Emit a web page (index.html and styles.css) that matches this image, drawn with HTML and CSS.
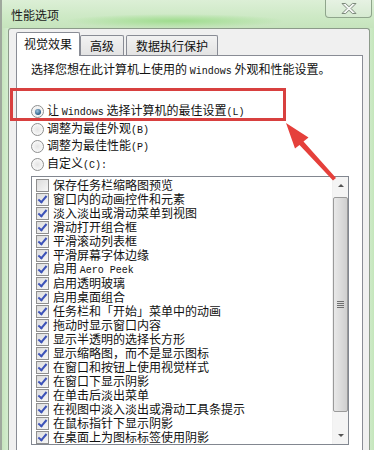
FILE: index.html
```html
<!DOCTYPE html>
<html lang="zh-CN">
<head>
<meta charset="utf-8">
<title>性能选项</title>
<link rel="stylesheet" href="styles.css">
</head>
<body>
<div class="window">
  <div class="titlebar">
    <span class="title">性能选项</span>
    <div class="close">
      <svg width="22" height="13" viewBox="0 0 22 13"><path d="M4 1.5h3.6l3.4 3.2 3.4-3.2H18l-5 5 5 5h-3.6L11 8.3l-3.4 3.2H4l5-5z" fill="#f4f6f4" stroke="#7d8a7c" stroke-width="1"/></svg>
    </div>
  </div>
  <div class="client">
    <div class="tabs">
      <div class="tab active">视觉效果</div>
      <div class="tab">高级</div>
      <div class="tab">数据执行保护</div>
    </div>
    <div class="panel">
      <p class="desc">选择您想在此计算机上使用的 <span class="lat">Windows</span> 外观和性能设置。</p>
      <div class="radios">
        <label class="radio checked"><span class="rb"></span><span class="txt">让 <span class="lat">Windows</span> 选择计算机的最佳设置<span class="lat">(L)</span></span></label>
        <label class="radio"><span class="rb"></span><span class="txt">调整为最佳外观<span class="lat">(B)</span></span></label>
        <label class="radio"><span class="rb"></span><span class="txt">调整为最佳性能<span class="lat">(P)</span></span></label>
        <label class="radio"><span class="rb"></span><span class="txt">自定义<span class="lat">(C):</span></span></label>
      </div>
      <div class="list">
        <ul class="items">
          <li><span class="cb"></span><span class="txt">保存任务栏缩略图预览</span></li>
          <li><span class="cb on"></span><span class="txt">窗口内的动画控件和元素</span></li>
          <li><span class="cb on"></span><span class="txt">淡入淡出或滑动菜单到视图</span></li>
          <li><span class="cb on"></span><span class="txt">滑动打开组合框</span></li>
          <li><span class="cb on"></span><span class="txt">平滑滚动列表框</span></li>
          <li><span class="cb on"></span><span class="txt">平滑屏幕字体边缘</span></li>
          <li><span class="cb on"></span><span class="txt">启用 <span class="lat">Aero Peek</span></span></li>
          <li><span class="cb on"></span><span class="txt">启用透明玻璃</span></li>
          <li><span class="cb on"></span><span class="txt">启用桌面组合</span></li>
          <li><span class="cb on"></span><span class="txt">任务栏和「开始」菜单中的动画</span></li>
          <li><span class="cb on"></span><span class="txt">拖动时显示窗口内容</span></li>
          <li><span class="cb on"></span><span class="txt">显示半透明的选择长方形</span></li>
          <li><span class="cb on"></span><span class="txt">显示缩略图，而不是显示图标</span></li>
          <li><span class="cb on"></span><span class="txt">在窗口和按钮上使用视觉样式</span></li>
          <li><span class="cb on"></span><span class="txt">在窗口下显示阴影</span></li>
          <li><span class="cb on"></span><span class="txt">在单击后淡出菜单</span></li>
          <li><span class="cb on"></span><span class="txt">在视图中淡入淡出或滑动工具条提示</span></li>
          <li><span class="cb on"></span><span class="txt">在鼠标指针下显示阴影</span></li>
          <li><span class="cb on"></span><span class="txt">在桌面上为图标标签使用阴影</span></li>
        </ul>
        <div class="scrollbar">
          <div class="arrow up"></div>
          <div class="thumb"><span class="grip"></span></div>
          <div class="arrow down"></div>
        </div>
      </div>
    </div>
  </div>
</div>
<div class="highlight"></div>
<svg class="pointer" width="374" height="450" viewBox="0 0 374 450">
  <polygon points="286,123 308.5,137.5 303.5,141.5 336,178 333,180.5 299.5,145 295,148.5" fill="#e5403b"/>
</svg>
</body>
</html>
```

FILE: styles.css
```css
* { box-sizing: border-box; }
html, body { margin: 0; padding: 0; }
body {
  width: 374px;
  height: 450px;
  overflow: hidden;
  position: relative;
  font-family: "Noto Sans CJK SC", "Noto Sans", sans-serif;
  font-size: 12px;
  color: #111;
  background: #cfe8c8;
}
.window {
  height: 450px;
  display: flex;
  flex-direction: column;
  background: linear-gradient(90deg, #9fa89d 0, #9fa89d 2px, #c6e4bd 2px, #d3ecce 8px, #d3ecce 368px, #c4e6bb 100%);
}
.titlebar {
  height: 28px;
  flex: none;
  display: flex;
  align-items: flex-start;
  justify-content: space-between;
  background:
    radial-gradient(ellipse 110px 7px at 175px 21px, #9fdc8e 0%, rgba(166,222,150,0.6) 50%, rgba(166,222,150,0) 100%),
    linear-gradient(90deg, #9fa89d 0, #9fa89d 2px, transparent 2px),
    linear-gradient(180deg, #dcefd6 0%, #cde9c5 60%, #c6e4bd 100%);
}
.title {
  margin: 6px 0 0 11px;
  line-height: 18px;
  color: #1a1a1a;
}
.close {
  width: 47px;
  height: 18px;
  margin-right: 2px;
  border: 1px solid #8fa58c;
  border-top: none;
  border-radius: 0 0 4px 4px;
  background: linear-gradient(180deg, #e6f2e3, #d6ead1);
  display: flex;
  align-items: center;
  justify-content: center;
}
.client {
  flex: 1;
  margin: 0 4px 0 8px;
  border: 1px solid #8c9a8a;
  border-bottom: none;
  border-radius: 3px 3px 0 0;
  background: #f0f0f0;
  display: flex;
  flex-direction: column;
  padding: 0 6px 0 7px;
}
.tabs {
  display: flex;
  align-items: flex-end;
  height: 26px;
  flex: none;
}
.tab {
  height: 20px;
  line-height: 19px;
  padding: 0 9px;
  border: 1px solid #898c95;
  border-bottom: none;
  background: linear-gradient(180deg, #f2f2f2, #e3e3e3);
  margin-right: 2px;
  border-radius: 2px 2px 0 0;
}
.tab.active {
  height: 24px;
  line-height: 22px;
  background: #fff;
  margin-right: 0;
  margin-bottom: -1px;
  position: relative;
  z-index: 1;
  padding: 0 7px;
}
.panel {
  flex: 1;
  background: #fff;
  border: 1px solid #898c95;
  border-bottom: none;
  padding: 5px 0 0 14px;
  display: flex;
  flex-direction: column;
}
.desc {
  margin: 0;
  line-height: 16px;
  height: 16px;
  white-space: pre;
}
.lat {
  font-family: "Liberation Mono", monospace;
  font-size: 10px;
}
.txt {
  white-space: pre;
  line-height: 14px;
}
.radios {
  margin-top: 26px;
  display: flex;
  flex-direction: column;
}
.radio {
  display: flex;
  align-items: center;
  height: 17.6px;
}
.rb {
  width: 13px;
  height: 13px;
  border-radius: 50%;
  border: 1px solid #8e8f8f;
  background: radial-gradient(circle, #e4e4e4 0, #f8f8f8 70%);
  margin-right: 3px;
  display: inline-flex;
  align-items: center;
  justify-content: center;
  flex: none;
}
.radio.checked .rb::after {
  content: "";
  width: 6px;
  height: 6px;
  border-radius: 50%;
  background: radial-gradient(circle at 40% 35%, #9ec4e0 0, #2b5e86 70%);
}
.list {
  margin-top: 3px;
  width: 318px;
  height: 269px;
  flex: none;
  border: 1px solid #828790;
  display: flex;
  background: #fff;
}
.items {
  flex: 1;
  list-style: none;
  margin: 0;
  padding: 1px 0 0 4px;
}
.items li {
  height: 14px;
  display: flex;
  align-items: center;
}
.cb {
  width: 13px;
  height: 13px;
  border: 1px solid #8f8f8f;
  background: linear-gradient(135deg, #dcdcdc, #f6f6f6);
  margin-right: 4px;
  flex: none;
  position: relative;
}
.cb.on::after {
  content: "";
  position: absolute;
  left: 3px;
  top: 0;
  width: 3px;
  height: 7px;
  border: solid #3c52b8;
  border-width: 0 2px 2px 0;
  transform: rotate(40deg);
}
.scrollbar {
  width: 16px;
  flex: none;
  background: #f4f4f4;
  border-left: 1px solid #f0f0f0;
  display: flex;
  flex-direction: column;
  align-items: center;
}
.arrow {
  height: 17px;
  width: 16px;
  flex: none;
  display: flex;
  align-items: center;
  justify-content: center;
}
.arrow::after {
  content: "";
  border-left: 3px solid transparent;
  border-right: 3px solid transparent;
}
.arrow.up::after { border-bottom: 3px solid #555; }
.arrow.down::after { border-top: 3px solid #555; }
.thumb {
  flex: 1;
  width: 15px;
  margin: 3px 0 15px;
  border: 1px solid #9a9a9a;
  border-radius: 2px;
  background: linear-gradient(90deg, #e8e8e8, #dcdcdc 50%, #cfcfcf);
  display: flex;
  align-items: center;
  justify-content: center;
}
.grip {
  width: 7px;
  height: 8px;
  background: repeating-linear-gradient(180deg, #6f6f6f 0, #6f6f6f 1px, transparent 1px, transparent 2px);
}
.highlight {
  position: absolute;
  left: 10px;
  top: 88px;
  width: 276px;
  height: 33px;
  border: 3px solid #d8403f;
}
.pointer {
  position: absolute;
  left: 0;
  top: 0;
  pointer-events: none;
}
```
